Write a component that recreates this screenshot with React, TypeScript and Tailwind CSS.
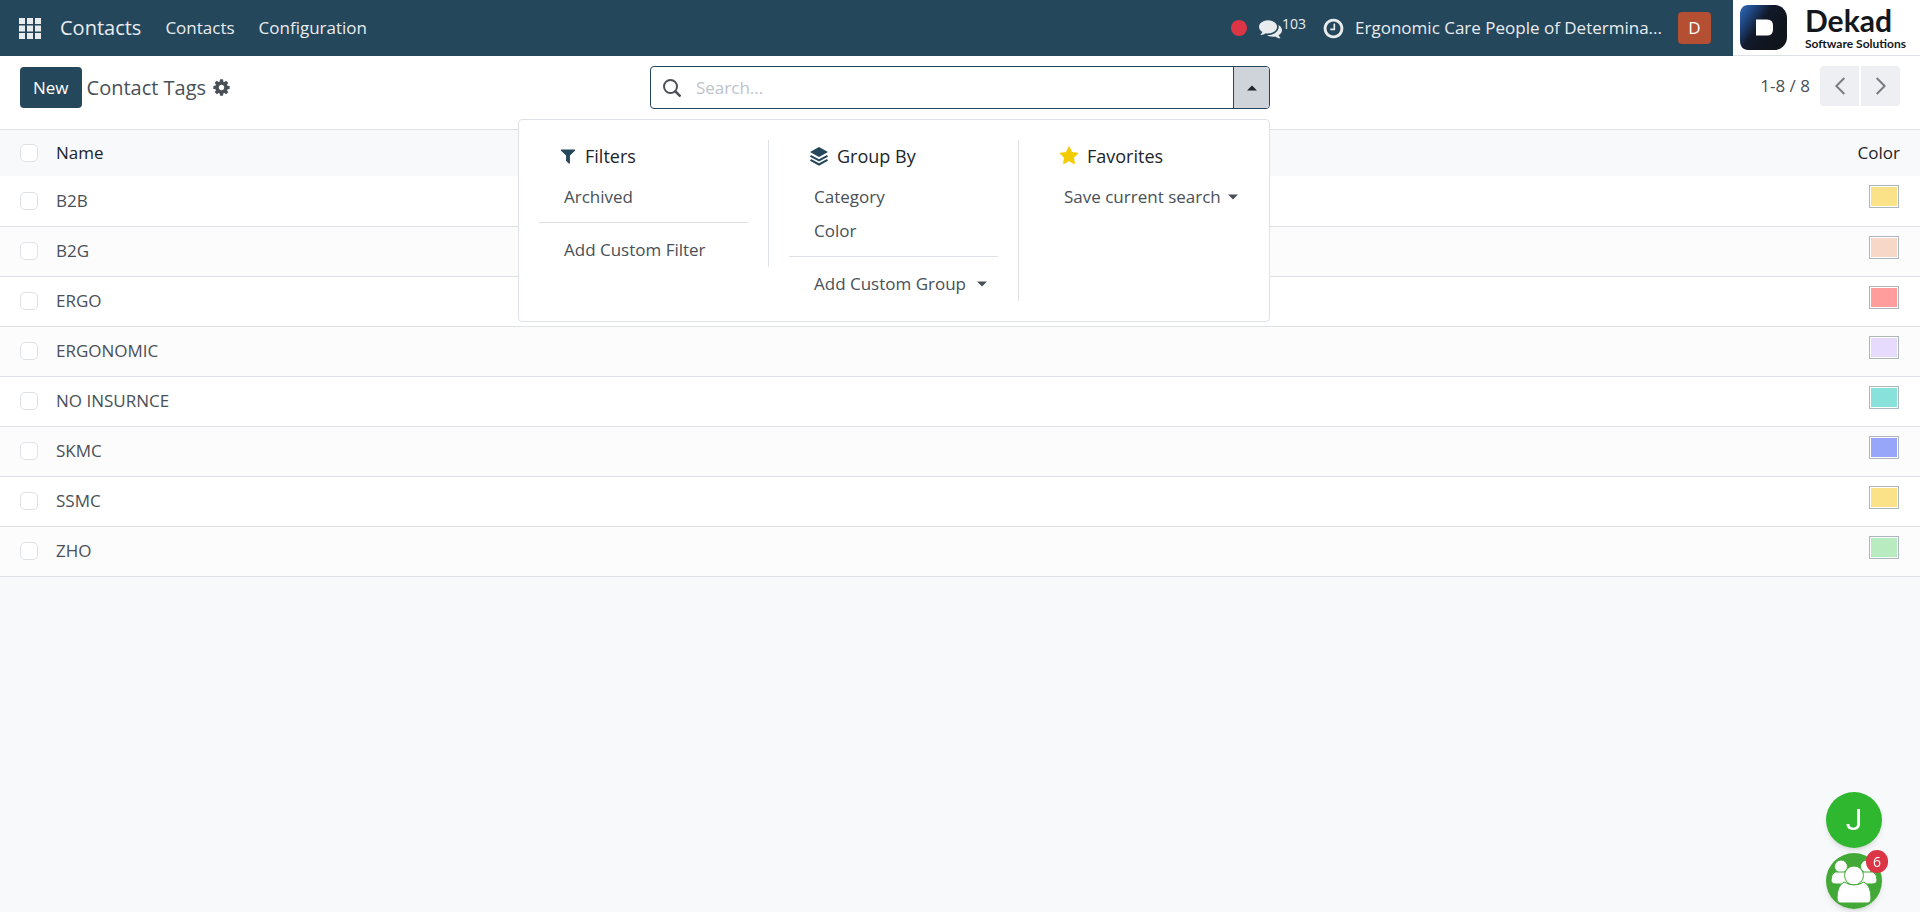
import { useState } from "react";
import type { ReactNode } from "react";

type Tag = {
  id: number;
  name: string;
  color: string;
};

const tags: Tag[] = [
  { id: 1, name: "B2B", color: "bg-[#fbe288]" },
  { id: 2, name: "B2G", color: "bg-[#f7d7c8]" },
  { id: 3, name: "ERGO", color: "bg-[#ff9c9c]" },
  { id: 4, name: "ERGONOMIC", color: "bg-[#e6dbfc]" },
  { id: 5, name: "NO INSURNCE", color: "bg-[#89e1db]" },
  { id: 6, name: "SKMC", color: "bg-[#97a6f9]" },
  { id: 7, name: "SSMC", color: "bg-[#fbe288]" },
  { id: 8, name: "ZHO", color: "bg-[#b8ebbf]" },
];

const ICONS = {
  cog: "M1152 896q0-106-75-181t-181-75-181 75-75 181 75 181 181 75 181-75 75-181zm512-109v222q0 12-8 23t-20 13l-185 28q-19 54-39 91 35 50 107 138 10 12 10 25t-9 23q-27 37-99 108t-94 71q-12 0-26-9l-138-108q-44 23-91 38-16 136-29 186-7 28-36 28h-222q-14 0-24.5-8.5t-11.5-21.5l-28-184q-49-16-90-37l-141 107q-10 9-25 9-14 0-25-11-126-114-165-168-7-10-7-23 0-12 8-23 15-21 51-66.5t54-70.5q-27-50-41-99l-183-27q-13-2-21-12.5t-8-23.5v-222q0-12 8-23t19-13l186-28q14-46 39-92-40-57-107-138-10-12-10-24 0-10 9-23 26-36 98.5-107.5t94.5-71.5q13 0 26 10l138 107q44-23 91-38 16-136 29-186 7-28 36-28h222q14 0 24.5 8.5t11.5 21.5l28 184q49 16 90 37l142-107q9-9 24-9 13 0 25 10 129 119 165 170 7 8 7 22 0 12-8 23-15 21-51 66.5t-54 70.5q26 50 41 98l183 28q13 2 21 12.5t8 23.5z",
  clock:
    "M1024 544v448q0 14-9 23t-23 9h-320q-14 0-23-9t-9-23v-64q0-14 9-23t23-9h224v-352q0-14 9-23t23-9h64q14 0 23 9t9 23zm416 352q0-148-73-273t-198-198-273-73-273 73-198 198-73 273 73 273 198 198 273 73 273-73 198-198 73-273zm224 0q0 209-103 385.5t-279.5 279.5-385.5 103-385.5-103-279.5-279.5-103-385.5 103-385.5 279.5-279.5 385.5-103 385.5 103 279.5 279.5 103 385.5z",
  comments:
    "M1408 768q0 139-94 257t-256.5 186.5-353.5 68.5q-86 0-176-16-124 88-278 128-36 9-86 16h-3q-11 0-20.5-8t-11.5-21q-1-3-1-6.5t.5-6.5 2-6l2.5-5 3.5-5.5 4-5 4.5-5 4-4.5q5-6 23-25t26-29.5 22.5-29 25-38.5 20.5-44q-124-72-195-177t-71-224q0-139 94-257t256.5-186.5 353.5-68.5 353.5 68.5 256.5 186.5 94 257zm384 256q0 120-71 224.5t-195 176.5q10 24 20.5 44t25 38.5 22.5 29 26 29.5 23 25q1 1 4 4.5t4.5 5 4 5 3.5 5.5l2.5 5 2 6 .5 6.5-1 6.5q-3 14-13 22t-22 7q-50-7-86-16-154-40-278-128-90 16-176 16-271 0-472-132 58 4 88 4 161 0 309-45t264-129q125-92 192-212t67-254q0-77-23-152 129 71 204 178t75 230z",
  filter:
    "M1595 295q17 41-14 70l-493 493v742q0 42-39 59-13 5-25 5-27 0-45-19l-256-256q-19-19-19-45v-486l-493-493q-31-29-14-70 17-39 59-39h1280q42 0 59 39z",
  star: "M1728 647q0 22-26 48l-363 354 86 500q1 7 1 20 0 21-10.5 35.5t-30.5 14.5q-19 0-40-12l-449-236-449 236q-22 12-40 12-21 0-31.5-14.5t-10.5-35.5q0-6 2-20l86-500-364-354q-25-27-25-48 0-37 56-46l502-73 225-455q19-41 49-41t49 41l225 455 502 73q56 9 56 46z",
};

function Icon({ name, className }: { name: keyof typeof ICONS; className?: string }) {
  return (
    <svg viewBox="0 0 1792 1792" fill="currentColor" className={className} aria-hidden="true">
      <path d={ICONS[name]} />
    </svg>
  );
}

function Caret({ up = false }: { up?: boolean }) {
  return (
    <svg viewBox="0 0 10 6" fill="currentColor" className="h-[6px] w-[10px] shrink-0" aria-hidden="true">
      <path d={up ? "M0 5.5 5 .5l5 5z" : "M0 .5h10l-5 5z"} />
    </svg>
  );
}

function AppsIcon() {
  return (
    <svg viewBox="0 0 22 21" fill="#e9ecef" className="h-[21px] w-[22px]" aria-hidden="true">
      {[0, 8, 16].map((x) =>
        [0, 7.5, 15].map((y) => <rect key={`${x}-${y}`} x={x} y={y} width="6" height="6" />)
      )}
    </svg>
  );
}

function LayersIcon() {
  return (
    <svg viewBox="0 0 18 19" className="h-[19px] w-5 text-[#25475c]" aria-hidden="true">
      <path d="M9 0l9 5-9 5-9-5z" fill="currentColor" />
      <path
        d="M.5 8.8 9 13.4l8.5-4.6M.5 12.8 9 17.5l8.5-4.7"
        fill="none"
        stroke="currentColor"
        strokeWidth="2"
      />
    </svg>
  );
}

function LogoMark() {
  return (
    <svg viewBox="0 0 47 45" className="h-[45px] w-[47px]" aria-hidden="true">
      <defs>
        <linearGradient id="mark" x1="0" y1="0.05" x2="0.85" y2="0.6">
          <stop offset="0" stopColor="#2f68b4" />
          <stop offset="0.25" stopColor="#1f4681" />
          <stop offset="0.55" stopColor="#11192a" />
          <stop offset="1" stopColor="#10151c" />
        </linearGradient>
      </defs>
      <path
        d="M8 0h26c8 0 13 6 13 13v19c0 7-5 13-13 13H8c-5 0-8-4-8-9V9c0-5 3-9 8-9z"
        fill="url(#mark)"
      />
      <path d="M16 14.5h11q6 0 6 6v4q0 6-6 6H16z" fill="#fff" />
    </svg>
  );
}

function GroupIcon() {
  return (
    <svg viewBox="0 0 56 56" className="h-14 w-14 rounded-full" aria-hidden="true">
      <rect width="56" height="56" fill="#43a936" />
      <g fill="#fff" stroke="#43a936" strokeWidth="1">
        <circle cx="15" cy="13.5" r="6.5" />
        <circle cx="41" cy="13.5" r="6.5" />
        <path d="M9 19h12l4 12H10q-5 0-5-4 0-6 4-8z" />
        <path d="M47 19H35l-4 12h15q5 0 5-4 0-6-4-8z" />
        <circle cx="28" cy="22.5" r="9.5" />
        <path d="M18 29q10 6 20 0 7 4 7 16 0 5-4 5H15q-4 0-4-5 0-12 7-16z" />
      </g>
    </svg>
  );
}

function MenuHeading({ icon, children }: { icon: ReactNode; children: ReactNode }) {
  return (
    <h3 className="flex h-8 items-center gap-2 pl-5 text-lg text-[#212529]">
      {icon}
      {children}
    </h3>
  );
}

function MenuItem({ children, caret = false }: { children: ReactNode; caret?: boolean }) {
  return (
    <button
      type="button"
      className="flex h-[34px] w-full items-center justify-between pr-[11px] pl-[25px] text-left whitespace-nowrap"
    >
      {children}
      {caret && <Caret />}
    </button>
  );
}

function Navbar() {
  return (
    <header className="flex h-14 bg-[#25475c] text-[#e9ecef]">
      <nav className="flex items-center pl-[19px]">
        <button type="button" aria-label="Apps" className="mr-[19px]">
          <AppsIcon />
        </button>
        <a href="#contacts" className="mr-6 text-xl">
          Contacts
        </a>
        <a href="#contacts" className="mr-6">
          Contacts
        </a>
        <a href="#configuration">Configuration</a>
      </nav>
      <div className="ml-auto flex items-center">
        <span className="mr-3 h-4 w-4 rounded-full bg-[#dc3545]" />
        <button type="button" aria-label="Messages" className="mr-4 flex items-center">
          <Icon name="comments" className="h-[23px] w-[23px]" />
          <span className="mb-2 text-sm leading-4">103</span>
        </button>
        <button type="button" aria-label="Activities" className="mr-[10px]">
          <Icon name="clock" className="h-[23px] w-[23px]" />
        </button>
        <button type="button" className="mr-4">
          Ergonomic Care People of Determina...
        </button>
        <button
          type="button"
          className="mr-[22px] flex h-8 w-[33px] items-center justify-center rounded bg-[#b44f33] text-white"
        >
          D
        </button>
      </div>
      <div className="flex w-[187px] items-center border-b border-[#dee2e6] bg-white pl-[7px] text-[#14171c]">
        <LogoMark />
        <div className="ml-[18px] font-[Lato,sans-serif] font-bold whitespace-nowrap">
          <div className="text-[30px] leading-8">Dekad</div>
          <div className="text-xs leading-4">Software Solutions</div>
        </div>
      </div>
    </header>
  );
}

function SearchMenu() {
  return (
    <div className="absolute top-[52px] -right-px z-10 flex w-[752px] items-start rounded border border-[#dee2e6] bg-white py-5">
      <section className="w-[250px] border-r border-[#dee2e6] px-5">
        <MenuHeading icon={<Icon name="filter" className="h-5 w-[18px] text-[#25475c]" />}>Filters</MenuHeading>
        <div className="mt-2">
          <MenuItem>Archived</MenuItem>
        </div>
        <hr className="mt-2 mb-[10px] border-[#dee2e6]" />
        <MenuItem>Add Custom Filter</MenuItem>
      </section>
      <section className="w-[250px] border-r border-[#dee2e6] px-5">
        <MenuHeading icon={<LayersIcon />}>Group By</MenuHeading>
        <div className="mt-2">
          <MenuItem>Category</MenuItem>
          <MenuItem>Color</MenuItem>
        </div>
        <hr className="mt-2 mb-[10px] border-[#dee2e6]" />
        <MenuItem caret>Add Custom Group</MenuItem>
      </section>
      <section className="w-[250px] px-5">
        <MenuHeading icon={<Icon name="star" className="h-5 w-5 text-[#f3cc00]" />}>Favorites</MenuHeading>
        <div className="mt-2">
          <MenuItem caret>Save current search</MenuItem>
        </div>
      </section>
    </div>
  );
}

function SearchBar() {
  const [open, setOpen] = useState(true);

  return (
    <div className="relative flex h-[43px] rounded border border-[#25475c]">
      <svg
        viewBox="0 0 18 18"
        className="mt-3 ml-3 h-[18px] w-[18px]"
        fill="none"
        stroke="#495057"
        strokeWidth="2"
        aria-hidden="true"
      >
        <circle cx="7.5" cy="7.5" r="6.5" />
        <path d="M12 12l5.5 5.5" strokeWidth="2.5" />
      </svg>
      <input
        type="text"
        aria-label="Search"
        placeholder="Search..."
        className="min-w-0 flex-1 px-[15px] outline-none placeholder:text-[#bcc3ca]"
      />
      <button
        type="button"
        aria-label="Toggle search panel"
        onClick={() => setOpen(!open)}
        className="flex w-9 items-center justify-center rounded-r-[3px] border-l border-[#25475c] bg-[#ced4da] text-[#212529]"
      >
        <Caret up={open} />
      </button>
      {open && <SearchMenu />}
    </div>
  );
}

function ControlPanel() {
  return (
    <div className="grid h-[74px] grid-cols-[1fr_620px_1fr] items-start border-b border-[#dee2e6] bg-white px-5 pt-[10px]">
      <div className="flex h-[43px] items-center">
        <button type="button" className="h-[41px] rounded bg-[#25475c] px-[13px] text-white">
          New
        </button>
        <h1 className="ml-[5px] text-xl">Contact Tags</h1>
        <button type="button" aria-label="Actions" className="ml-[6px]">
          <Icon name="cog" className="h-[19px] w-[19px]" />
        </button>
      </div>
      <SearchBar />
      <div className="flex items-center justify-end">
        <span className="mr-[10px]">1-8 / 8</span>
        <button
          type="button"
          aria-label="Previous"
          className="mr-[2px] flex h-10 w-[39px] items-center justify-center rounded-l bg-[#eeeff3]"
        >
          <svg viewBox="0 0 10 18" className="h-[18px] w-[10px]" fill="none" stroke="#777b80" strokeWidth="2" aria-hidden="true">
            <path d="M9.3 1 1.3 9l8 8" />
          </svg>
        </button>
        <button
          type="button"
          aria-label="Next"
          className="flex h-10 w-[39px] items-center justify-center rounded-r bg-[#eeeff3]"
        >
          <svg viewBox="0 0 10 18" className="h-[18px] w-[10px]" fill="none" stroke="#777b80" strokeWidth="2" aria-hidden="true">
            <path d="M.7 1l8 8-8 8" />
          </svg>
        </button>
      </div>
    </div>
  );
}

function Checkbox({ label }: { label: string }) {
  return (
    <input
      type="checkbox"
      aria-label={label}
      className="block h-[18px] w-[18px] appearance-none rounded-[5px] border border-[#dee2e6] bg-white checked:bg-[#25475c]"
    />
  );
}

function TagTable() {
  return (
    <table className="w-full border-collapse">
      <thead>
        <tr className="h-[46px] bg-[#f8f9fb] text-left text-[#212529]">
          <th className="w-14 pl-5">
            <Checkbox label="Select all" />
          </th>
          <th className="font-normal">Name</th>
          <th className="pr-5 text-right font-normal">Color</th>
        </tr>
      </thead>
      <tbody>
        {tags.map((tag) => (
          <tr key={tag.id} className="h-[50px] border-b border-[#dee2e6] bg-white even:bg-[#fcfcfc]">
            <td className="pl-5">
              <Checkbox label={tag.name} />
            </td>
            <td>{tag.name}</td>
            <td className="pr-[21px] pb-2">
              <div className="ml-auto h-[23px] w-[30px] border border-[#adb5bd] bg-white p-px">
                <div className={`h-full ${tag.color}`} />
              </div>
            </td>
          </tr>
        ))}
      </tbody>
    </table>
  );
}

function ChatHeads() {
  return (
    <div className="fixed right-[38px] bottom-[3px] flex flex-col gap-[5px]">
      <button
        type="button"
        className="flex h-14 w-14 items-center justify-center rounded-full bg-[#2fb72f] font-[Roboto,sans-serif] text-3xl text-white shadow-md"
      >
        J
      </button>
      <button type="button" aria-label="Group conversation" className="relative rounded-full shadow-md">
        <GroupIcon />
        <span className="absolute -top-[3px] -right-[6px] flex h-[23px] w-[22px] items-center justify-center rounded-full bg-[#dc3545] text-sm text-white">
          6
        </span>
      </button>
    </div>
  );
}

export default function App() {
  return (
    <div className="min-h-screen bg-[#f8f9fb] font-['Open_Sans',sans-serif] text-[17px] leading-6 text-[#495057]">
      <Navbar />
      <ControlPanel />
      <TagTable />
      <ChatHeads />
    </div>
  );
}
